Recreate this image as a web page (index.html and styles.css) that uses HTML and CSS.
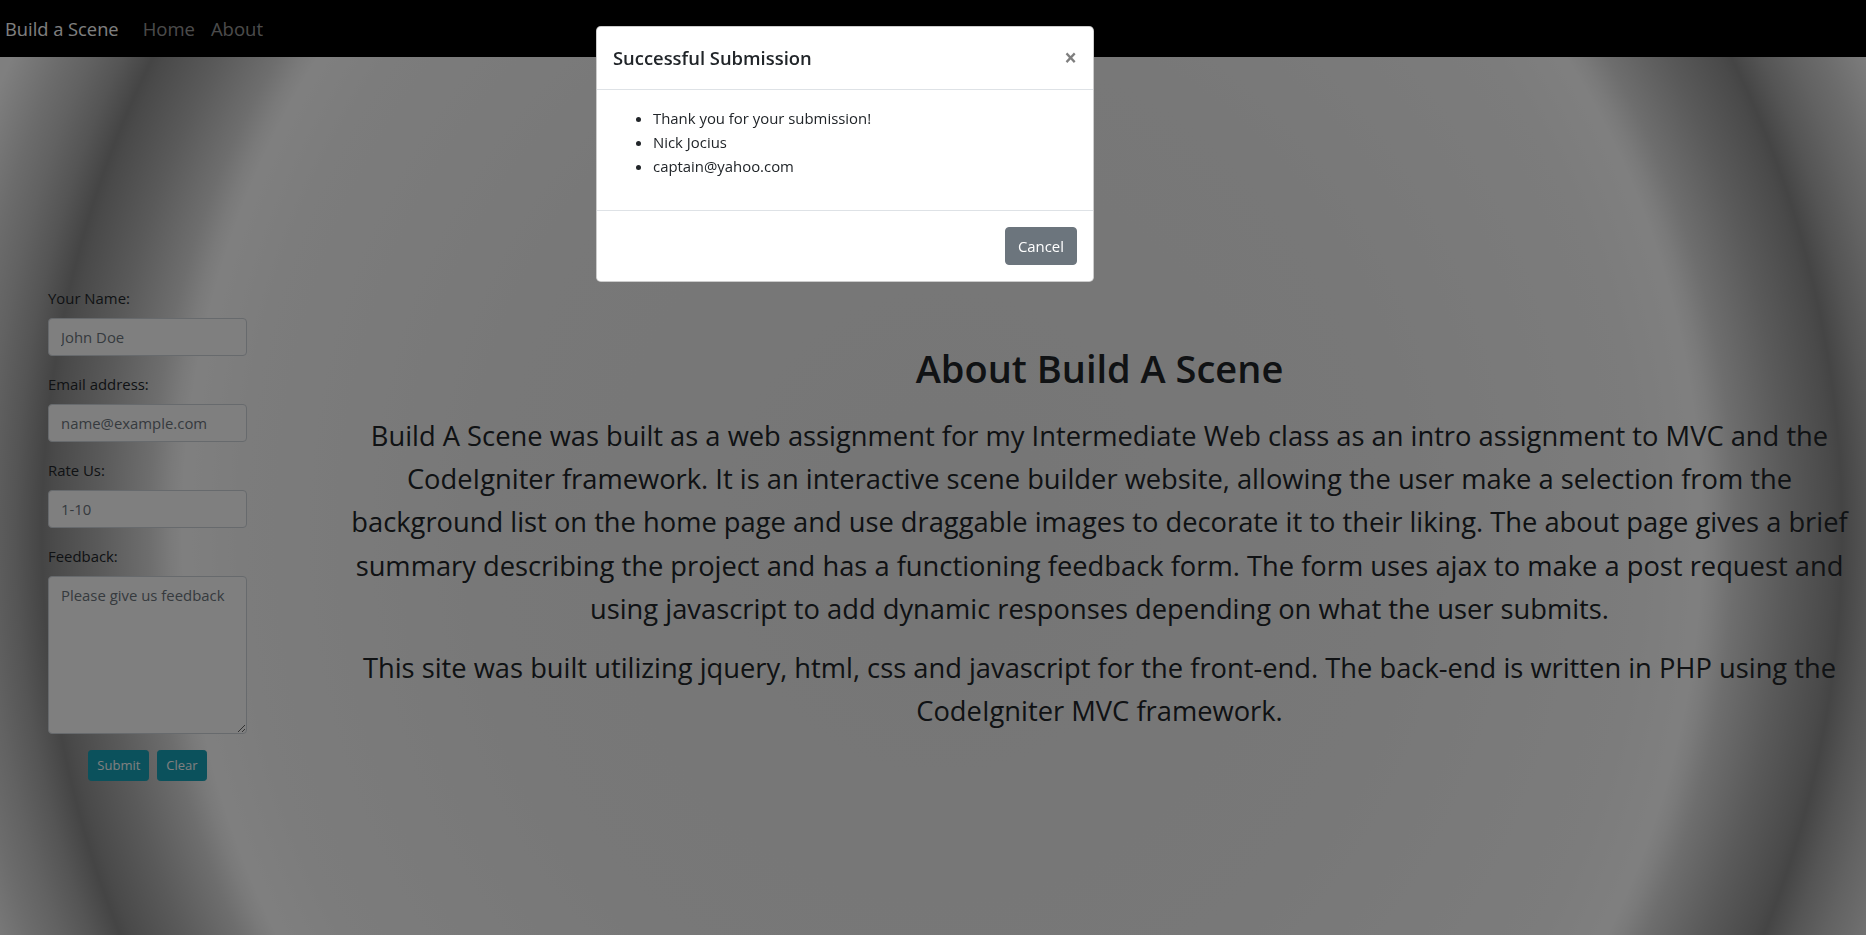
FILE: index.html
```html
<!DOCTYPE html>
<html lang="en">
<head>
<meta charset="utf-8">
<title>About - Build a Scene</title>
<link rel="stylesheet" href="styles.css">
</head>
<body>
<nav class="navbar">
  <a class="brand" href="#">Build a Scene</a>
  <ul class="nav-links">
    <li><a href="#">Home</a></li>
    <li><a href="#">About</a></li>
  </ul>
</nav>

<main class="page">
  <aside class="feedback">
    <form class="feedback-form">
      <div class="form-group">
        <label for="name">Your Name:</label>
        <input id="name" class="form-control" type="text" placeholder="John Doe">
      </div>
      <div class="form-group">
        <label for="email">Email address:</label>
        <input id="email" class="form-control" type="email" placeholder="name@example.com">
      </div>
      <div class="form-group">
        <label for="rate">Rate Us:</label>
        <input id="rate" class="form-control" type="text" placeholder="1-10">
      </div>
      <div class="form-group">
        <label for="feedback">Feedback:</label>
        <textarea id="feedback" class="form-control form-textarea" rows="6" placeholder="Please give us feedback"></textarea>
      </div>
      <div class="form-actions">
        <button type="button" class="btn btn-sm btn-info">Submit</button>
        <button type="reset" class="btn btn-sm btn-info">Clear</button>
      </div>
    </form>
  </aside>

  <section class="about">
    <h1 class="about-title">About Build A Scene</h1>
    <p class="about-text">Build A Scene was built as a web assignment for my Intermediate Web class as an intro assignment to MVC and the CodeIgniter framework. It is an interactive scene builder website, allowing the user make a selection from the background list on the home page and use draggable images to decorate it to their liking. The about page gives a brief summary describing the project and has a functioning feedback form. The form uses ajax to make a post request and using javascript to add dynamic responses depending on what the user submits.</p>
    <p class="about-text">This site was built utilizing jquery, html, css and javascript for the front-end. The back-end is written in PHP using the CodeIgniter MVC framework.</p>
  </section>
</main>

<div class="modal-backdrop"></div>

<div class="modal" role="dialog" aria-labelledby="modal-title">
  <div class="modal-header">
    <h5 class="modal-title" id="modal-title">Successful Submission</h5>
    <button type="button" class="close" aria-label="Close">&times;</button>
  </div>
  <div class="modal-body">
    <ul class="result-list">
      <li>Thank you for your submission!</li>
      <li>Nick Jocius</li>
      <li>captain@yahoo.com</li>
    </ul>
  </div>
  <div class="modal-footer">
    <button type="button" class="btn btn-secondary">Cancel</button>
  </div>
</div>
</body>
</html>
```

FILE: styles.css
```css
* {
  box-sizing: border-box;
}

html,
body {
  margin: 0;
  padding: 0;
}

body {
  font-family: "Open Sans", "Noto Sans", sans-serif;
  font-size: 14.9px;
  line-height: 24px;
  color: #212529;
  min-height: 100vh;
  overflow: hidden;
  background-color: #ececec;
  background-image: radial-gradient(
    ellipse 893px 979px at 942px 532px,
    #ececec 0%,
    #f0f0f0 50%,
    #f8f8f8 78%,
    #ffffff 85%,
    #f4f4f4 86.5%,
    #dcdcdc 88.8%,
    #b4b4b4 94.4%,
    #949494 99.6%,
    #8a8a8a 100.8%,
    #aaaaaa 103.8%,
    #c4c4c4 107%,
    #d8d8d8 110%,
    #ffffff 115%
  );
}

/* ---------- navbar ---------- */
.navbar {
  height: 57px;
  background: #000;
  display: flex;
  align-items: center;
  padding: 0 5px;
}

.brand {
  color: #fff;
  font-size: 18.3px;
  line-height: 30px;
  text-decoration: none;
  margin-right: 16px;
}

.nav-links {
  display: flex;
  list-style: none;
  margin: 0;
  padding: 0;
}

.nav-links a {
  display: block;
  padding: 0 8px;
  color: rgba(255, 255, 255, 0.6);
  text-decoration: none;
  font-size: 18.5px;
  line-height: 30px;
}

/* ---------- page layout ---------- */
.page {
  display: grid;
  grid-template-columns: 333px 1fr;
  align-items: start;
}

.feedback {
  padding: 229px 0 0 48px;
}

.feedback-form {
  width: 199px;
}

.form-group {
  margin-bottom: 16px;
}

.form-group label {
  display: block;
  margin-bottom: 8px;
}

.form-control {
  display: block;
  width: 100%;
  height: 38px;
  padding: 6px 12px;
  font-family: inherit;
  font-size: 14.9px;
  line-height: 24px;
  color: #495057;
  background: #fff;
  border: 1px solid #ced4da;
  border-radius: 4px;
}

.form-control::placeholder {
  color: #6c757d;
  opacity: 1;
}

.form-textarea {
  height: 158px;
  resize: vertical;
}

.form-actions {
  display: flex;
  justify-content: center;
  gap: 8px;
}

.btn {
  display: inline-block;
  font-family: inherit;
  font-weight: 400;
  text-align: center;
  border: 1px solid transparent;
  cursor: pointer;
}

.btn-sm {
  padding: 4px 8px;
  font-size: 13px;
  line-height: 21px;
  border-radius: 3.2px;
}

.btn-info {
  color: #fff;
  background: #17a2b8;
  border-color: #17a2b8;
}

.btn-secondary {
  color: #fff;
  background: #6c757d;
  border-color: #6c757d;
  padding: 6px 12px;
  font-size: 14.9px;
  line-height: 24px;
  border-radius: 4px;
}

/* ---------- about ---------- */
.about {
  text-align: center;
  padding-top: 287px;
}

.about-title {
  font-size: 38px;
  line-height: 48px;
  font-weight: 600;
  margin: 0 0 22px;
}

.about-text {
  max-width: 1524px;
  margin: 0 auto 16px;
  font-size: 27.3px;
  line-height: 43.2px;
}

/* ---------- modal ---------- */
.modal-backdrop {
  position: fixed;
  inset: 0;
  background: rgba(0, 0, 0, 0.5);
}

.modal {
  position: fixed;
  top: 26px;
  left: 596px;
  width: 498px;
  background: #fff;
  border: 1px solid rgba(0, 0, 0, 0.2);
  border-radius: 4.8px;
}

.modal-header {
  display: flex;
  align-items: flex-start;
  justify-content: space-between;
  padding: 16px;
  border-bottom: 1px solid #dee2e6;
}

.modal-title {
  margin: 0;
  font-size: 18.4px;
  line-height: 30px;
  font-weight: 600;
}

.close {
  padding: 16px;
  margin: -12px -16px -16px auto;
  background: transparent;
  border: 0;
  font-family: inherit;
  font-size: 22.3px;
  font-weight: 700;
  line-height: 1;
  color: #000;
  opacity: 0.5;
  cursor: pointer;
}

.modal-body {
  padding: 16px;
}

.result-list {
  margin: 0 0 16px;
  padding-left: 40px;
}

.modal-footer {
  display: flex;
  justify-content: flex-end;
  padding: 12px;
  border-top: 1px solid #dee2e6;
}

.modal-footer .btn {
  margin: 4px;
}
```
